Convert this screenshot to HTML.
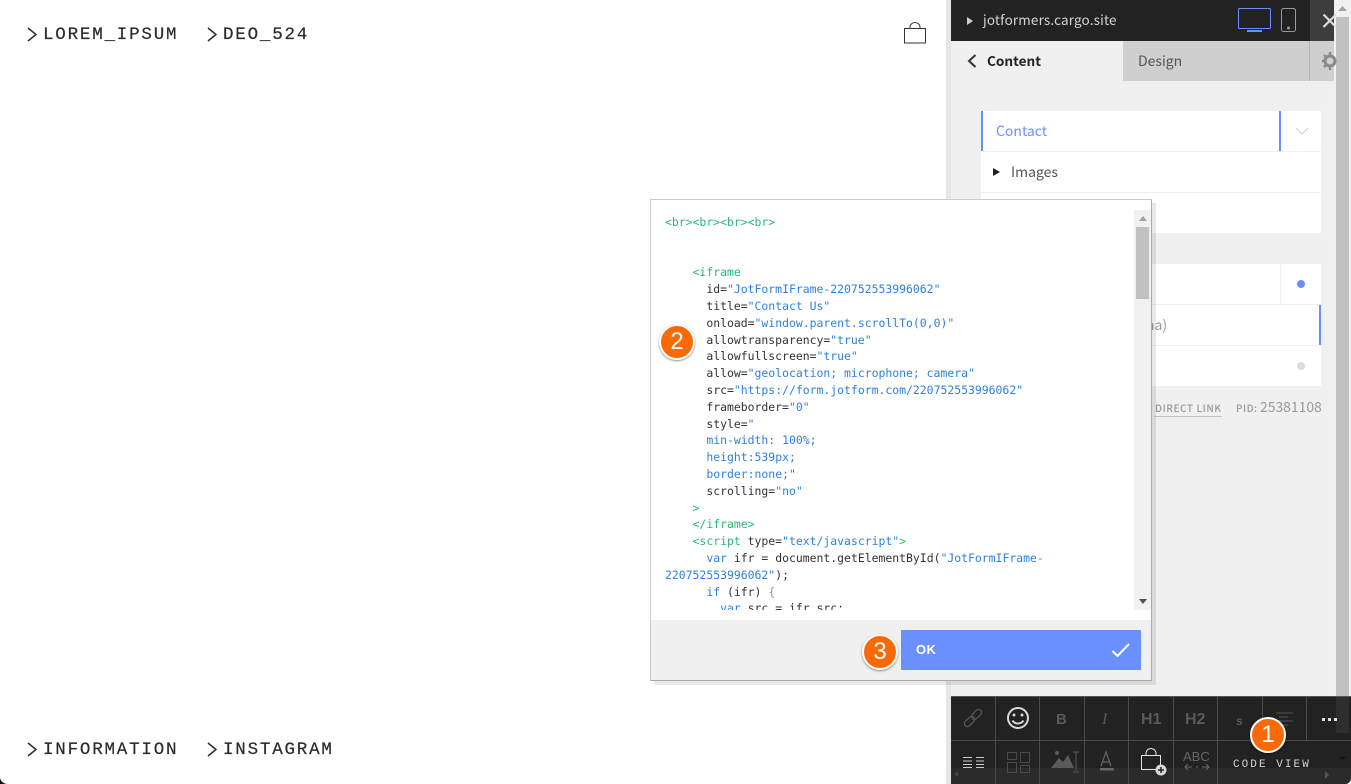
<!DOCTYPE html>
<html><head><meta charset="utf-8"><style>
html,body{margin:0;padding:0;width:1351px;height:784px;overflow:hidden;background:#fff}
div,span,svg{position:absolute}
svg{overflow:visible}
.nav{font:17.5px "Liberation Mono",monospace;letter-spacing:1.8px;color:#2a2a33;white-space:pre;line-height:20px;-webkit-text-stroke:.2px #2a2a33}
.ui{font-family:"Noto Sans CJK JP","DejaVu Sans",sans-serif;white-space:pre}
.code{left:665px;width:470px;font:11.45px/16.8px "DejaVu Sans Mono",monospace;color:#333;white-space:pre}
.g{color:#2cb67a}.b{color:#2f80e0}
.row{background:#fff;left:981px;width:340px}
.v{top:697px;width:1px;background:#4a4a4a}
.ti{font:bold 16px "Liberation Sans",sans-serif;color:#5a5a5a}
.badge{width:32px;height:32px;border:2px solid #fff;border-radius:50%;background:#f96a06;color:#fff;font:24px/32px "Liberation Sans",sans-serif;text-align:center;box-shadow:0 1px 2px rgba(0,0,0,.45)}
</style></head><body>

<div class="nav" style="left:43px;top:25px">LOREM_IPSUM</div>
<div class="nav" style="left:223px;top:25px">DEO_524</div>
<div class="nav" style="left:43px;top:740px">INFORMATION</div>
<div class="nav" style="left:223px;top:740px">INSTAGRAM</div>
<svg style="left:0;top:0" width="240" height="784" fill="none" stroke="#2a2a33" stroke-width="1.5">
<path d="M28 28l8 6.500-8 6.500"/><path d="M208 28l8 6.500-8 6.500"/>
<path d="M28 743l8 6.500-8 6.500"/><path d="M208 743l8 6.500-8 6.500"/>
</svg>
<svg style="left:904px;top:22px" width="23" height="22" fill="none" stroke="#333" stroke-width="1">
<rect x=".5" y="6.500" width="21" height="14.500"/><path d="M6 6.500V5a5 4.500 0 0 1 10 0v1.500"/></svg>
<svg style="left:0;top:778px" width="8" height="6"><path d="M0 0Q1 5 7 6H0z" fill="#111"/></svg>

<div style="left:946px;top:0;width:5px;height:784px;background:#e6e6e6"></div>
<div style="left:951px;top:0;width:383px;height:784px;background:#f0f0f0"></div>
<div style="left:1334px;top:0;width:17px;height:784px;background:#f1f1f1"></div>
<div style="left:1336px;top:17px;width:13px;height:720px;background:#c1c1c1"></div>
<svg style="left:1338px;top:6px" width="9" height="6"><path d="M0 5L4.500 0 9 5z" fill="#a3a3a3"/></svg>

<div style="left:951px;top:0;width:383px;height:41px;background:#222"></div>
<div style="left:1310px;top:0;width:24px;height:41px;background:#3d3d3d"></div>
<svg style="left:967px;top:17px" width="6" height="8"><path d="M0 0l6 4-6 4z" fill="#ccc"/></svg>
<div class="ui" style="left:983px;top:9px;font-size:13.500px;line-height:20px;color:#d4d4d4;letter-spacing:.15px">jotformers.cargo.site</div>
<svg style="left:1238px;top:8px" width="34" height="25" fill="none" stroke="#6a90ff" stroke-width="1"><rect x=".5" y=".5" width="32" height="20" rx="1"/><path d="M9 23h15" stroke-width="2"/></svg>
<svg style="left:1281px;top:8px" width="16" height="24" fill="none" stroke="#9a9a9a"><rect x=".5" y=".5" width="14" height="23" rx="2"/><circle cx="7.500" cy="20" r="1" fill="#9a9a9a"/></svg>
<svg style="left:1323px;top:14px" width="11" height="14"><path d="M.5 .5L13 13M13 .5L.5 13" stroke="#ddd" stroke-width="2.200" fill="none"/></svg>

<div style="left:1123px;top:41px;width:211px;height:40px;background:#cfcfcf"></div>
<div style="left:1309px;top:41px;width:1px;height:40px;background:#b4b4b4"></div>
<svg style="left:967px;top:54px" width="10" height="14" fill="none" stroke="#333" stroke-width="2"><path d="M8.500 1L2 7l6.500 6"/></svg>
<div class="ui" style="left:987px;top:50px;font-size:13.600px;line-height:20px;font-weight:700;color:#222">Content</div>
<div class="ui" style="left:1138px;top:51px;font-size:14px;line-height:20px;color:#555">Design</div>
<svg style="left:1322px;top:52px" width="12" height="18" viewBox="0 0 12 18"><circle cx="8" cy="9" r="5" fill="none" stroke="#8a8a8a" stroke-width="3"/><path d="M8 0v4M8 14v4M0 9h4M2 3l3 3M2 15l3-3" stroke="#8a8a8a" stroke-width="2.500"/></svg>

<div class="row" style="top:111px;height:40px"></div>
<div style="left:981px;top:111px;width:2px;height:40px;background:#6a90ff"></div>
<div style="left:1279px;top:111px;width:2px;height:40px;background:#6a90ff"></div>
<div class="ui" style="left:996px;top:121px;font-size:14px;line-height:20px;color:#6a90ff">Contact</div>
<svg style="left:1295px;top:127px" width="14" height="8" fill="none" stroke="#ccc"><path d="M1 1l6 6 6-6"/></svg>
<div class="row" style="top:152px;height:40px"></div>
<svg style="left:993px;top:168px" width="7" height="8"><path d="M0 0l7 4-7 4z" fill="#222"/></svg>
<div class="ui" style="left:1011px;top:162px;font-size:14px;line-height:20px;color:#555">Images</div>
<div class="row" style="top:193px;height:40px"></div>

<div class="row" style="top:264px;height:40px"></div>
<div style="left:1280px;top:264px;width:1px;height:40px;background:#f0f0f0"></div>
<div style="left:1297px;top:280px;width:8px;height:8px;border-radius:50%;background:#6a90ff"></div>
<div class="row" style="top:305px;height:40px"></div>
<div style="left:1319px;top:305px;width:2px;height:40px;background:#6a90ff"></div>
<div class="ui" style="left:1146px;top:315px;font-size:14px;line-height:20px;color:#999">na)</div>
<div class="row" style="top:346px;height:40px"></div>
<div style="left:1297px;top:362px;width:8px;height:8px;border-radius:50%;background:#ddd"></div>
<div class="ui" style="left:1155px;top:400px;font-size:10px;line-height:16px;font-weight:500;color:#999;letter-spacing:.6px">DIRECT LINK</div>
<div style="left:1154px;top:416px;width:68px;height:1px;background:#c4c4c4"></div>
<div class="ui" style="left:1236px;top:400px;font-size:10px;line-height:16px;font-weight:500;color:#999;letter-spacing:.5px">PID:</div>
<div class="ui" style="left:1260px;top:397px;font-size:14px;line-height:20px;color:#999;letter-spacing:-.05px">25381108</div>

<div style="left:951px;top:696px;width:400px;height:88px;background:#222;border-top:1px solid #555;box-sizing:border-box;border-bottom-right-radius:6px"></div>
<div style="left:951px;top:740px;width:400px;height:1px;background:#4a4a4a"></div>
<div style="left:951px;top:768px;width:400px;height:16px;background:#2b2b2b;border-bottom-right-radius:6px"></div>
<div style="left:1336px;top:697px;width:13px;height:36px;background:#2e2e2e"></div>
<div class="v" style="left:995px;height:87px"></div><div class="v" style="left:1039px;height:87px"></div>
<div class="v" style="left:1084px;height:87px"></div><div class="v" style="left:1128px;height:87px"></div>
<div class="v" style="left:1173px;height:87px"></div><div class="v" style="left:1217px;height:87px"></div>
<div class="v" style="left:1262px;height:43px"></div><div class="v" style="left:1306px;height:43px"></div>

<svg style="left:951px;top:697px" width="400" height="87" fill="none">
<g stroke="#555" stroke-width="1.300" transform="rotate(-45 22 21)"><rect x="11" y="18" width="12" height="6" rx="3"/><rect x="21" y="18" width="12" height="6" rx="3"/></g>
<circle cx="67" cy="21" r="10" stroke="#d8d8d8" stroke-width="2"/>
<circle cx="63" cy="18" r="1.500" fill="#d8d8d8"/><circle cx="71" cy="18" r="1.500" fill="#d8d8d8"/>
<path d="M61.500 23.500a6.500 6.500 0 0 0 11 0" stroke="#d8d8d8" stroke-width="2"/>
<g stroke="#555"><path d="M325 16h17M328 20h9M325 24h17M328 28h9"/></g>
<g fill="#e0e0e0"><rect x="371" y="21" width="3" height="3"/><rect x="377" y="21" width="3" height="3"/><rect x="383" y="21" width="3" height="3"/></g>
<g stroke="#ccc"><path d="M12 60.500h9M12 64h9M12 67.500h9M12 70.500h9M25 60.500h8M25 64h8M25 67.500h8M25 70.500h8"/></g>
<g stroke="#4a4a4a"><rect x="56.500" y="55.500" width="9" height="7"/><rect x="56.500" y="65.500" width="9" height="10"/><rect x="69.500" y="55.500" width="9" height="10"/><rect x="69.500" y="68.500" width="9" height="7"/></g>
<path d="M100 71l8-10 4 4 5-7 6 13z" fill="#5a5a5a"/><circle cx="106" cy="56" r="2" fill="#5a5a5a"/>
<path d="M122 55h6M125 55v19M122 75h6" stroke="#5a5a5a"/>
<path d="M150 69l5-14 5 14M152 65h6" stroke="#666" stroke-width="1.200"/><rect x="149" y="71" width="14" height="2.500" fill="#666"/>
<rect x="190.500" y="58.500" width="19" height="14" stroke="#e2e2e2"/>
<path d="M195 58.500v-2a5 5 0 0 1 10 0v2" stroke="#e2e2e2"/>
<circle cx="210" cy="73" r="5.500" fill="#d8d8d8"/><path d="M207 73h6M210 70v6" stroke="#222" stroke-width="1.500"/>
<path d="M234 70h7M245 70h2M251 70h7M237 67l-3 3 3 3M255 67l3 3-3 3" stroke="#666"/>
<path d="M388 60h7l-3.500 3z" fill="#111"/>
<path d="M374 74v8l4-4z" fill="#555"/>
<path d="M7 74l-4 3 4 3z" fill="#444"/>
</svg>
<div class="ti" style="left:1056px;top:711px;font-size:15px">B</div>
<div style="left:1102px;top:711px;font:italic 16px 'Liberation Serif',serif;color:#5a5a5a">I</div>
<div class="ti" style="left:1141px;top:711px">H1</div>
<div class="ti" style="left:1185px;top:711px">H2</div>
<div class="ti" style="left:1236px;top:714px;font-size:12px">s</div>
<div style="left:1183px;top:750px;font:13px/14px 'Liberation Sans',sans-serif;color:#666">ABC</div>
<div style="left:1233px;top:758px;font:11px/14px 'Liberation Mono',monospace;letter-spacing:2.050px;color:#d4d4d4;white-space:pre">CODE VIEW</div>

<div style="left:650px;top:199px;width:502px;height:482px;box-sizing:border-box;background:#fff;border:1px solid #ccc;border-bottom-color:#aaa;border-right-color:#aaa;box-shadow:4px 4px 0 rgba(0,0,0,.09)"></div>
<div style="left:651px;top:205px;width:484px;height:405px;overflow:hidden">
<div class="code" style="left:14px;top:9px"><span style="position:static" class="g">&lt;br&gt;&lt;br&gt;&lt;br&gt;&lt;br&gt;</span>


    <span style="position:static" class="g">&lt;iframe</span>
      id=<span style="position:static" class="b">"JotFormIFrame-220752553996062"</span>
      title=<span style="position:static" class="b">"Contact Us"</span>
      onload=<span style="position:static" class="b">"window.parent.scrollTo(0,0)"</span>
      allowtransparency=<span style="position:static" class="b">"true"</span>
      allowfullscreen=<span style="position:static" class="b">"true"</span>
      allow=<span style="position:static" class="b">"geolocation; microphone; camera"</span>
      src=<span style="position:static" class="b">"https://form.jotform.com/220752553996062"</span>
      frameborder=<span style="position:static" class="b">"0"</span>
      style=<span style="position:static" class="b">"</span>
      <span style="position:static" class="b">min-width: 100%;</span>
      <span style="position:static" class="b">height:539px;</span>
      <span style="position:static" class="b">border:none;"</span>
      scrolling=<span style="position:static" class="b">"no"</span>
    <span style="position:static" class="g">&gt;</span>
    <span style="position:static" class="g">&lt;/iframe&gt;</span>
    <span style="position:static" class="g">&lt;script</span> type=<span style="position:static" class="b">"text/javascript"</span><span style="position:static" class="g">&gt;</span>
      <span style="position:static" class="b">var</span> ifr = document.getElementById(<span style="position:static" class="b">"JotFormIFrame-</span>
<span style="position:static" class="b">220752553996062"</span>);
      <span style="position:static" class="b">if</span> (ifr) <span style="position:static;color:#999">{</span>
        <span style="position:static" class="b">var</span> src = ifr.src;</div>
</div>
<div style="left:1134px;top:210px;width:17px;height:400px;background:#f1f1f1"></div>
<div style="left:1136px;top:227px;width:13px;height:72px;background:#c1c1c1"></div>
<svg style="left:1139px;top:216px" width="8" height="5"><path d="M0 5L4 0l4 5z" fill="#a3a3a3"/></svg>
<svg style="left:1139px;top:599px" width="8" height="5"><path d="M0 0l4 5 4-5z" fill="#505050"/></svg>
<div style="left:651px;top:620px;width:500px;height:60px;background:#f0f0f0"></div>
<div style="left:901px;top:630px;width:240px;height:40px;background:#6a90ff"></div>
<div style="left:916px;top:642px;font:bold 13px/16px 'Liberation Sans',sans-serif;letter-spacing:.4px;color:#fff">OK</div>
<svg style="left:1111px;top:642px" width="20" height="16" fill="none" stroke="#fff" stroke-width="2"><path d="M1.500 9l5 5L18 2"/></svg>

<div class="badge" style="left:1250px;top:717px">1</div>
<div class="badge" style="left:659px;top:324px">2</div>
<div class="badge" style="left:862px;top:634px">3</div>
</body></html>
